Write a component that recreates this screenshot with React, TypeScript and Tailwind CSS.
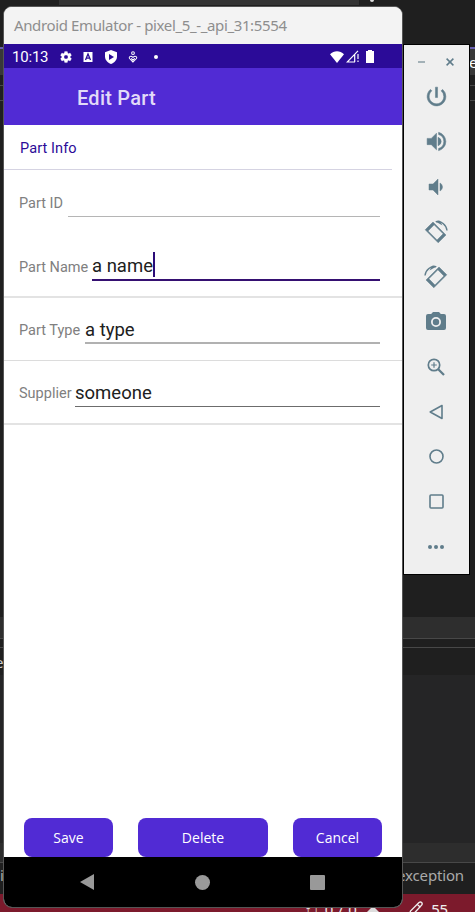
import type { ReactNode } from 'react';

function Icon({ d, className, bold }: { d: string; className: string; bold?: boolean }) {
  return (
    <svg viewBox="0 0 24 24" className={className} fill="currentColor" stroke={bold ? 'currentColor' : 'none'} strokeWidth="0.5">
      <path d={d} fillRule="evenodd" />
    </svg>
  );
}

const paths = {
  gear: 'M19.14 12.94c.04-.3.06-.61.06-.94s-.02-.64-.07-.94l2.03-1.58a.49.49 0 0 0 .12-.61l-1.92-3.32a.49.49 0 0 0-.59-.22l-2.39.96a7 7 0 0 0-1.62-.94l-.36-2.54a.48.48 0 0 0-.48-.41h-3.84a.47.47 0 0 0-.47.41l-.36 2.54c-.59.24-1.13.57-1.62.94l-2.39-.96a.48.48 0 0 0-.59.22L2.74 8.87a.47.47 0 0 0 .12.61l2.03 1.58a6 6 0 0 0 0 1.88l-2.03 1.58a.49.49 0 0 0-.12.61l1.92 3.32c.12.22.37.29.59.22l2.39-.96c.5.38 1.03.7 1.62.94l.36 2.54c.05.24.24.41.48.41h3.84c.24 0 .44-.17.47-.41l.36-2.54a7 7 0 0 0 1.62-.94l2.39.96c.22.08.47 0 .59-.22l1.92-3.32a.47.47 0 0 0-.12-.61zM12 15.6a3.6 3.6 0 1 1 0-7.2 3.6 3.6 0 0 1 0 7.2z',
  power: 'M13 3h-2v10h2V3zm4.83 2.17-1.42 1.42A6.92 6.92 0 0 1 19 12a7 7 0 1 1-11.42-5.42L6.17 5.17A9 9 0 1 0 21 12a8.96 8.96 0 0 0-3.17-6.83z',
  volumeUp: 'M3 9v6h4l5 5V4L7 9H3zm10.5-1.03v8.05A4.47 4.47 0 0 0 16.5 12a4.5 4.5 0 0 0-3-4.03zM14 3.23v2.06a7 7 0 0 1 0 13.42v2.06a9 9 0 0 0 0-17.54z',
  volumeDown: 'M18.5 12A4.5 4.5 0 0 0 16 7.97v8.05A4.48 4.48 0 0 0 18.5 12zM5 9v6h4l5 5V4L9 9H5z',
  camera: 'M9 2 7.17 4H4a2 2 0 0 0-2 2v12a2 2 0 0 0 2 2h16a2 2 0 0 0 2-2V6a2 2 0 0 0-2-2h-3.17L15 2H9zm3 15a5 5 0 1 1 0-10 5 5 0 0 1 0 10zm0-1.8a3.2 3.2 0 1 0 0-6.4 3.2 3.2 0 0 0 0 6.4z',
};

function Rotate({ flip }: { flip?: boolean }) {
  return (
    <svg viewBox="0 0 24 24" className={flip ? 'size-6 -scale-x-100' : 'size-6'} fill="currentColor">
      <path
        fillRule="evenodd"
        stroke="currentColor"
        strokeWidth="0.5"
        strokeLinejoin="round"
        d="M9 2 22 15l-7.8 7.8-13-13zM10.15 4.85l-6.1 6.1 9 9 6.1-6.1z"
      />
      <path d="M12 1.7c5-1.3 10.3 3 11 8.8" fill="none" stroke="currentColor" strokeWidth="1.4" />
      <path d="m11 1.2 4.4-.7 3.2 5z" />
    </svg>
  );
}

function Tool({ children }: { children: ReactNode }) {
  return <div className="flex h-[45px] items-center justify-center">{children}</div>;
}

function EmulatorTools() {
  return (
    <div className="absolute left-[403px] top-[44px] h-[531px] w-[67px] border border-black bg-[#efefef] text-[#607d8b]">
      <div className="flex h-[29px] items-center justify-between pl-[14px] pr-[15px] pt-[5px]">
        <div className="h-[2px] w-[7px] bg-[#a3b1b7]" />
        <svg viewBox="0 0 8 8" className="size-2" stroke="currentColor" strokeWidth="1.5"><path d="m.6.6 6.8 6.8m0-6.8L.6 7.4" /></svg>
      </div>
      <div className="-ml-[1px]">
        <Tool><Icon d={paths.power} bold className="size-[25px]" /></Tool>
        <Tool><Icon d={paths.volumeUp} bold className="size-[25px]" /></Tool>
        <Tool><Icon d={paths.volumeDown} bold className="size-6" /></Tool>
        <Tool><Rotate /></Tool>
        <Tool><Rotate flip /></Tool>
        <Tool><Icon d={paths.camera} className="size-6" /></Tool>
        <Tool>
          <svg viewBox="0 0 18 18" className="size-[18px]" fill="none" stroke="currentColor">
            <circle cx="7" cy="7" r="5.7" strokeWidth="1.7" />
            <path d="m11 11 6 6" strokeWidth="2.3" />
            <path d="M7 4.2v5.6M4.2 7h5.6" strokeWidth="1.2" />
          </svg>
        </Tool>
        <Tool>
          <svg viewBox="0 0 16 16" className="size-4" fill="none" stroke="currentColor" strokeWidth="1.6" strokeLinejoin="round"><path d="M2.2 8 14 1.5v13z" /></svg>
        </Tool>
        <Tool>
          <svg viewBox="0 0 15 15" className="size-[15px]" fill="none" stroke="currentColor" strokeWidth="1.6"><circle cx="7.5" cy="7.5" r="6.5" /></svg>
        </Tool>
        <Tool>
          <svg viewBox="0 0 15 15" className="size-[15px]" fill="none" stroke="currentColor" strokeWidth="1.6"><rect x="1" y="1" width="13" height="13" rx="1" /></svg>
        </Tool>
        <Tool>
          <div className="flex gap-[2px]">
            <i className="size-1 rounded-full bg-[#607d8b]" />
            <i className="size-1 rounded-full bg-[#607d8b]" />
            <i className="size-1 rounded-full bg-[#607d8b]" />
          </div>
        </Tool>
      </div>
    </div>
  );
}

function StatusBar() {
  return (
    <div className="flex h-6 items-center bg-[#2b0b98] pl-2 pt-[1px] text-white">
      <span className="w-[47px] whitespace-nowrap text-[15px] leading-6 tracking-[-0.2px]">10:13</span>
      <Icon d={paths.gear} bold className="size-[14px]" />
      <svg viewBox="0 0 10 12" className="ml-[10px] h-[12px] w-[10px]">
        <path fill="white" d="M.5 1h9v10h-9z" />
        <path fill="none" stroke="#2b0b98" strokeWidth="1.3" d="m2.5 9 2.5-6 2.5 6M3.4 7.2h3.2" />
      </svg>
      <svg viewBox="0 0 14 14" className="ml-[11px] size-[14px]">
        <path fill="white" d="M7 0 13 2.3v4.2c0 3.5-2.5 6.1-6 7.5-3.5-1.4-6-4-6-7.5V2.3z" />
        <path fill="#2b0b98" d="m5 4 5 3-5 3z" />
      </svg>
      <svg viewBox="0 0 10 13" className="ml-[10px] h-[12px] w-[10px]" fill="none" stroke="white" strokeWidth="1.1">
        <circle cx="5" cy="2.3" r="1.5" />
        <path d="M5 12 1.5 8.4C-.2 6.5 2.4 4.5 5 7c2.6-2.5 5.2-.5 3.5 1.4zM3 8l2 2 2-2" />
      </svg>
      <div className="ml-[16px] size-1 rounded-full bg-white" />
      <svg viewBox="0 0 14 12" className="ml-auto h-3 w-[14px]" fill="white"><path d="M0 3.2C4-.7 10-.7 14 3.2L7 12z" /></svg>
      <svg viewBox="0 0 14 13" className="ml-[2px] h-[13px] w-[14px]" fill="none" stroke="white" strokeWidth="1.2"><path d="M12 .8 1.2 12H9M8.7 4v8M12 4v5m0 1.5V12" /></svg>
      <svg viewBox="0 0 8 13" className="ml-[6px] mr-[28px] h-[13px] w-2" fill="white"><path d="M2 0h4v1h2v12H0V1h2z" /></svg>
    </div>
  );
}

function PhoneWindow() {
  return (
    <div className="absolute left-[3px] top-[6px] flex h-[902px] w-[400px] flex-col overflow-hidden rounded-[9px] border border-[#555] bg-white font-['Roboto',sans-serif]">
      <div className="flex h-[37px] shrink-0 items-center bg-[#f3f3f3] pl-[10px] font-['Noto_Sans',sans-serif] text-[15px] tracking-[-0.37px] text-[#8e8e8e]">
        <span className="whitespace-nowrap">Android Emulator - pixel_5_-_api_31:5554</span>
      </div>
      <StatusBar />
      <div className="flex h-[57px] items-center bg-[#512bd4] pl-[73px] pt-[2px] text-[20px] font-medium tracking-[0.25px] text-[#e2daf8]">Edit Part</div>
      <div className="flex h-[45px] w-[388px] items-center border-b border-[#d5d3e2] pl-4 pt-[3px] text-[14.5px] tracking-[0.1px] text-[#2b0b98]">Part Info</div>

      <div className="flex h-[63px] items-start pl-[15px] pr-[22px]">
        <div className="w-[49px] whitespace-nowrap pt-[24px] text-[14.5px] leading-5 text-[#808080]">Part ID</div>
        <div className="h-[47px] flex-1 border-b border-[#b5b5b5]" />
      </div>
      <div className="flex h-[65px] items-start border-b-2 border-[#e3e3e3] pl-[15px] pr-[22px]">
        <div className="w-[73px] whitespace-nowrap pt-[25px] text-[14.5px] leading-5 text-[#808080]">Part Name</div>
        <div className="flex h-[48px] flex-1 border-b-2 border-[#351071] pt-[20px] text-[18.5px] leading-[26px] text-[#202020]">
          a name<div className="-mt-[1px] h-[25px] w-[2px] bg-[#2b0b78]" />
        </div>
      </div>
      <div className="flex h-[63px] items-start border-b border-[#dcdcdc] pl-[15px] pr-[22px]">
        <div className="w-[66px] whitespace-nowrap pt-[23px] text-[14.5px] leading-5 text-[#808080]">Part Type</div>
        <div className="h-[46px] flex-1 border-b-2 border-[#b1b1b1] pt-[19px] text-[18.5px] leading-[26px] text-[#202020]">a type</div>
      </div>
      <div className="flex h-[64px] items-start border-b-2 border-[#e3e3e3] pl-[15px] pr-[22px]">
        <div className="w-[56px] whitespace-nowrap pt-[23px] text-[14.5px] leading-5 text-[#808080]">Supplier</div>
        <div className="h-[46px] flex-1 border-b border-[#6c6c6c] pt-[19px] text-[18.5px] leading-[26px] text-[#202020]">someone</div>
      </div>

      <div className="mt-auto flex h-[39px] shrink-0 justify-between pl-5 pr-[20px] font-['Open_Sans',sans-serif] text-[14px] text-white">
        <button className="w-[89px] rounded-lg bg-[#512bd4]">Save</button>
        <button className="w-[130px] rounded-lg bg-[#512bd4]">Delete</button>
        <button className="w-[89px] rounded-lg bg-[#512bd4]">Cancel</button>
      </div>
      <div className="flex h-[50px] shrink-0 items-center justify-between bg-black pl-[76px] pr-[77px] text-[#999]">
        <svg viewBox="0 0 14 16" className="h-4 w-[14px]" fill="currentColor"><path d="M0 8 14 0v16z" /></svg>
        <div className="size-[15px] rounded-full bg-[#999]" />
        <div className="size-[15px] rounded-[1px] bg-[#999]" />
      </div>
    </div>
  );
}

function IdeBackdrop() {
  return (
    <div className="flex h-full flex-col font-['Noto_Sans',sans-serif]">
      <div className="flex h-[47px]">
        <div className="ml-[59px] h-[5px] w-[300px] bg-[#333]" />
        <div className="ml-[11px] h-[2px] w-1 rounded-b bg-[#ddd]" />
      </div>
      <div className="h-[2px] bg-[#6860b0]" />
      <div className="flex h-[26px] items-center justify-end bg-[#383838] text-[15px] text-white"><span className="w-[6px]">e</span></div>
      <div className="h-[11px] border-b border-[#484848]" />
      <div className="h-[15px] border-b border-[#484848]" />
      <div className="h-[516px]" />
      <div className="h-[22px] border-b border-[#484848] bg-[#2e2e2e]" />
      <div className="h-[9px] border-b border-[#484848]" />
      <div className="h-[27px] overflow-hidden text-[15px] leading-[28px] text-[#ccc]"><span className="-ml-[5px]">ee</span></div>
      <div className="h-[168px] bg-[#252526]" />
      <div className="h-[20px] border-b border-[#484848] bg-[#2d2d2d]" />
      <div className="flex h-[31px] items-center justify-between pr-[11px] text-[15px] tracking-[-0.15px] text-[#aaa]"><span className="pb-[6px]">i</span><span className="pb-[7px]">exception</span></div>
      <div className="flex h-[18px] justify-end overflow-hidden bg-[#7c1a2c] pr-[27px] text-[15px] leading-[30px] text-[#eee]">
        <span className="mr-[10px] whitespace-nowrap tracking-[0.4px]">↑↓ 0 / 0</span>
        <svg viewBox="0 0 12 12" className="mt-[12px] size-3" fill="#ddd"><path d="m6 0 6 6-6 6-6-6z" /></svg>
        <svg viewBox="0 0 16 16" className="ml-[29px] mt-[7px] size-4 shrink-0" fill="none" stroke="#eee" strokeWidth="1.4"><path d="m1 15 1.5-5L11 1.5q1.5-1 2.6 0t0 2.6L5.5 13zM9.5 3.5l3 3" /></svg>
        <span className="ml-[7px] tracking-[-0.2px]">55</span>
      </div>
    </div>
  );
}

export default function App() {
  return (
    <main className="relative h-[912px] w-[475px] overflow-hidden bg-[#1f1f1f]">
      <IdeBackdrop />
      <PhoneWindow />
      <EmulatorTools />
    </main>
  );
}
